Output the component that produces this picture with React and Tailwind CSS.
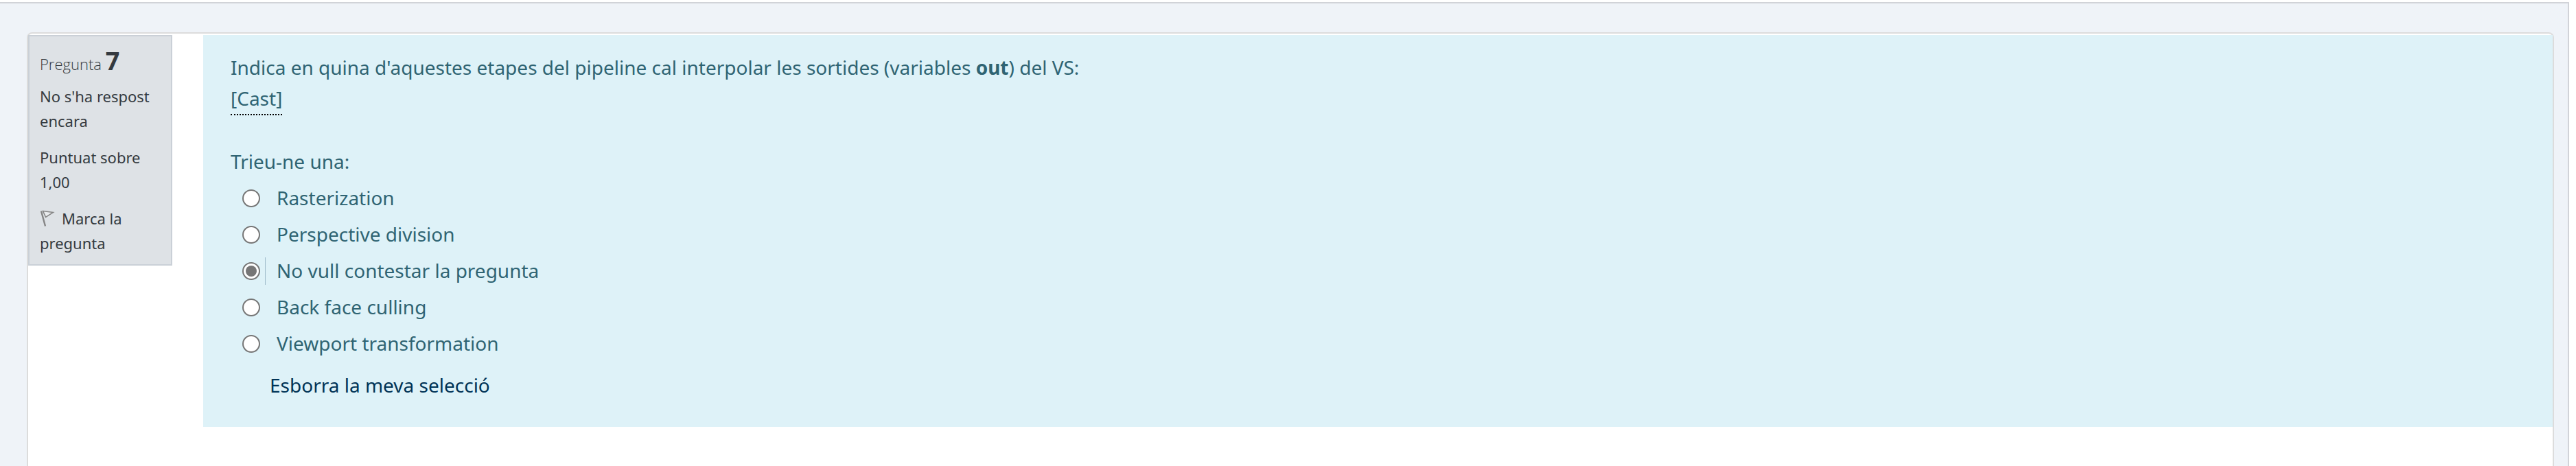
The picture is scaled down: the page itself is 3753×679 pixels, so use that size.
import { useState } from "react";

const OPTIONS = [
  "Rasterization",
  "Perspective division",
  "No vull contestar la pregunta",
  "Back face culling",
  "Viewport transformation",
];

function FlagIcon() {
  return (
    <svg viewBox="0 0 22 24" className="mr-[10px] inline-block h-6 w-[22px] align-[-3px]" fill="none" aria-hidden="true">
      <path d="M2 1.5 8 23.5" stroke="#858585" strokeWidth="2.4" />
      <path d="M4.6 1.6 19.5 3.4 8.6 10.4Z" fill="#e9ebed" stroke="#858585" strokeWidth="1.5" />
    </svg>
  );
}

function QuestionInfo() {
  return (
    <aside className="flex w-[210px] shrink-0 flex-col gap-[17px] border-2 border-[#cad0d7] bg-[#dee2e6] px-[15px] pt-4 pb-[13px] text-[22px] leading-9 text-[#343a40]">
      <h3 className="-mb-3 font-['Open_Sans','Noto_Sans',sans-serif] text-[22px] leading-[48px] font-light">
        Pregunta <span className="text-[36px] leading-none font-bold">7</span>
      </h3>
      <p>No s'ha respost encara</p>
      <p>Puntuat sobre 1,00</p>
      <a href="#marca">
        <FlagIcon />
        Marca la pregunta
      </a>
    </aside>
  );
}

function QuestionBody() {
  const [selected, setSelected] = useState(2);
  return (
    <section className="min-w-0 flex-1 bg-[#def2f8] px-10 pt-[25px] pb-[38px] text-[28px] leading-[45px] text-[#2f6473]">
      <p>
        Indica en quina d'aquestes etapes del pipeline cal interpolar les sortides (variables <strong>out</strong>) del VS:
      </p>
      <a href="#cast" className="inline-block border-b-2 border-dotted border-black">
        [Cast]
      </a>
      <fieldset className="mt-[45px]">
        <legend>Trieu-ne una:</legend>
        <div className="pt-1">
          {OPTIONS.map((option, i) => (
            <div key={option} className="flex items-center py-1 pl-[17px]">
              <input
                type="radio"
                id={`opt-${i}`}
                name="answer"
                checked={selected === i}
                onChange={() => setSelected(i)}
                className="grid size-[26px] appearance-none place-content-center rounded-full border-2 border-[#767676] bg-white before:size-4 before:rounded-full checked:before:bg-[#767676]"
              />
              <span className={`ml-[7px] h-10 w-px ${i === 2 ? "bg-[#9fbccb]" : ""}`} />
              <label htmlFor={`opt-${i}`} className="pl-4">
                {option}
              </label>
            </div>
          ))}
        </div>
      </fieldset>
      <button type="button" onClick={() => setSelected(-1)} className="mt-3 ml-[57px] block text-[#003356]">
        Esborra la meva selecció
      </button>
    </section>
  );
}

export default function App() {
  return (
    <div className="flex min-h-screen flex-col bg-white pt-[3px] pr-[10px] font-['Noto_Sans','Open_Sans',sans-serif]">
      <div className="flex grow flex-col border-t-2 border-r-2 border-[#d1d3d8] bg-[#eff3f8] pt-[42px] pr-5 pl-[39px]">
        <main className="flex grow items-start gap-[45px] rounded-t-lg border-2 border-b-0 border-[#dcdcdc] bg-white pt-[2px]">
          <QuestionInfo />
          <QuestionBody />
        </main>
      </div>
    </div>
  );
}
